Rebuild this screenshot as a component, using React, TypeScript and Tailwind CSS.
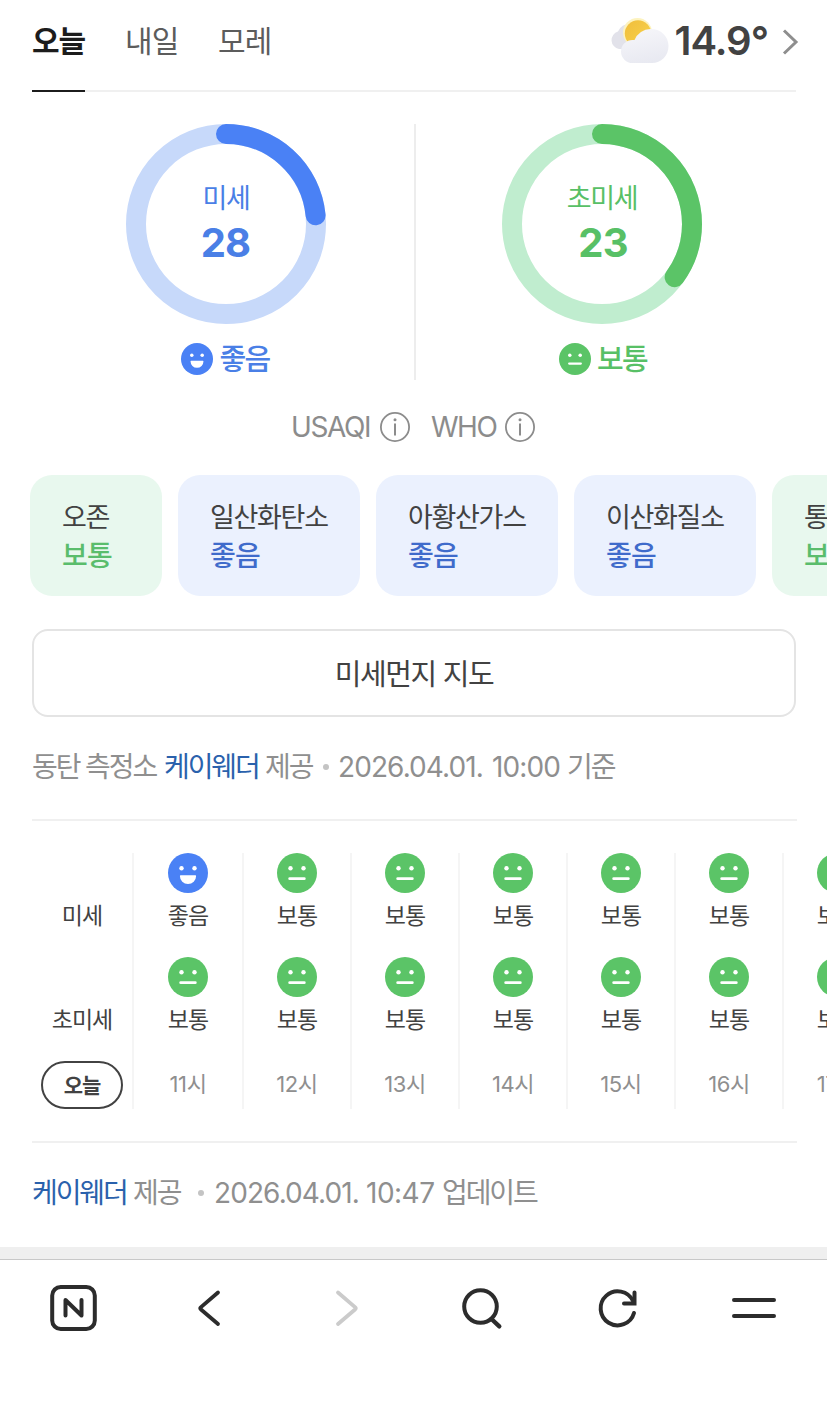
import React from 'react';

type Grade = 'good' | 'normal';

interface Hour {
  time: string;
  dust: Grade;
  fine: Grade;
}

const gradeLabel: Record<Grade, string> = {
  good: '좋음',
  normal: '보통'
};

const gradeFill: Record<Grade, string> = {
  good: '#4a81f5',
  normal: '#5bc467'
};

const pollutants: { name: string; grade: Grade; width: string }[] = [
  { name: '오존', grade: 'normal', width: 'w-[132px]' },
  { name: '일산화탄소', grade: 'good', width: 'w-[182px]' },
  { name: '아황산가스', grade: 'good', width: 'w-[182px]' },
  { name: '이산화질소', grade: 'good', width: 'w-[182px]' },
  { name: '통합대기', grade: 'normal', width: 'w-[182px]' }
];

const hours: Hour[] = [
  { time: '11시', dust: 'good', fine: 'normal' },
  { time: '12시', dust: 'normal', fine: 'normal' },
  { time: '13시', dust: 'normal', fine: 'normal' },
  { time: '14시', dust: 'normal', fine: 'normal' },
  { time: '15시', dust: 'normal', fine: 'normal' },
  { time: '16시', dust: 'normal', fine: 'normal' },
  { time: '17시', dust: 'normal', fine: 'normal' }
];

const Face: React.FC<{ grade: Grade; size: number }> = ({ grade, size }) => (
  <svg width={size} height={size} viewBox="0 0 40 40" className="shrink-0">
    <circle cx="20" cy="20" r="20" fill={gradeFill[grade]} />
    <circle cx="13.5" cy="15.2" r="2.2" fill="#fff" />
    <circle cx="26.5" cy="15.2" r="2.2" fill="#fff" />
    {grade === 'good' ? (
      <path d="M12.6 22.2h14.8q.7 0 .7.7a8.1 8.1 0 0 1-16.2 0q0-.7.7-.7z" fill="#fff" />
    ) : (
      <path d="M12.7 25.7h14.6" stroke="#fff" strokeWidth="2.8" strokeLinecap="round" />
    )}
  </svg>
);

const Gauge: React.FC<{ label: string; value: number; ratio: number; grade: Grade }> = ({ label, value, ratio, grade }) => {
  const length = 2 * Math.PI * 90;
  const isGood = grade === 'good';
  return (
    <div className={`flex w-[376px] flex-col items-center ${isGood ? 'text-[#4a7fe6]' : 'text-[#58c066]'}`}>
      <div className="grid h-[200px] w-[200px] place-items-center">
        <svg width="200" height="200" className="col-start-1 row-start-1 -rotate-90">
          <circle cx="100" cy="100" r="90" fill="none" strokeWidth="20" stroke={isGood ? '#c7d9fa' : '#c0edcf'} />
          <circle
            cx="100"
            cy="100"
            r="90"
            fill="none"
            strokeWidth="20"
            strokeLinecap="round"
            stroke={gradeFill[grade]}
            strokeDasharray={`${length * ratio} ${length}`}
          />
        </svg>
        <div className="col-start-1 row-start-1 flex flex-col items-center pb-[6px]">
          <span className="text-[27px] leading-[44px] tracking-[-1.4px]">{label}</span>
          <span className={`text-[40px] leading-[44px] font-bold tracking-[-0.8px] ${isGood ? 'pr-[1px]' : 'pl-[2px]'}`}>{value}</span>
        </div>
      </div>
      <div className={`mt-[19px] flex h-8 items-center gap-[6px] ${isGood ? 'mr-[1px]' : 'ml-[2px]'}`}>
        <Face grade={grade} size={32} />
        <span className="pt-[2px] text-[29px] leading-8 font-medium tracking-[-1.6px]">{gradeLabel[grade]}</span>
      </div>
    </div>
  );
};

const InfoIcon: React.FC = () => (
  <svg width="30" height="30" viewBox="0 0 30 30" fill="none" stroke="#8c8c8c">
    <circle cx="15" cy="15" r="14.1" strokeWidth="1.8" />
    <path d="M15 11.5v12" strokeWidth="2" />
    <circle cx="15" cy="7.7" r="1.5" fill="#8c8c8c" stroke="none" />
  </svg>
);

const WeatherIcon: React.FC = () => (
  <svg width="60" height="50" viewBox="0 0 60 50">
    <defs>
      <linearGradient id="cloud" x1="0.3" y1="0" x2="0.6" y2="1">
        <stop offset="0" stopColor="#f6f6fa" />
        <stop offset="1" stopColor="#e8e9f1" />
      </linearGradient>
      <linearGradient id="sun" x1="0" y1="0" x2="1" y2="1">
        <stop offset="0" stopColor="#f0bd3c" />
        <stop offset="1" stopColor="#f8d44c" />
      </linearGradient>
    </defs>
    <path d="M10 34a9 9 0 0 1-1-17.5A12 12 0 0 1 21 9c7 0 11 6 11 12v13z" fill="#e2e2ea" />
    <circle cx="28.5" cy="17.5" r="14.5" fill="#fdf3bf" />
    <circle cx="29" cy="18.5" r="13.2" fill="url(#sun)" />
    <path d="M23.5 48a11.5 11.5 0 0 1 0-23q1 0 2 .1A17 17 0 0 1 42 14c10 0 17.5 7.5 17.5 17 0 10-7.5 17-16.5 17z" fill="url(#cloud)" />
  </svg>
);

const Dot: React.FC<{ className: string }> = ({ className }) => (
  <i className={`mb-[1px] h-[6px] w-[6px] shrink-0 rounded-full bg-[#c4c4c4] ${className}`} />
);

const BottomNav: React.FC = () => (
  <nav className="flex h-[162px] items-start border-t border-[#c8c8c8] bg-white pt-6 pl-[49px]">
    <svg width="48" height="48" viewBox="0 0 48 48" fill="none" stroke="#2c2c2c" strokeWidth="4" strokeLinecap="round" strokeLinejoin="round">
      <rect x="3.2" y="3" width="42.6" height="42" rx="8.5" />
      <path d="M16.5 31.5V16L32.5 31.5V16" />
    </svg>
    <svg width="48" height="48" viewBox="0 0 48 48" className="ml-[88px]" fill="none" stroke="#2c2c2c" strokeWidth="3.8" strokeLinecap="round" strokeLinejoin="round">
      <path d="M33 8.5 15.7 23.4q-1 .9 0 1.8L33 40" />
    </svg>
    <svg width="48" height="48" viewBox="0 0 48 48" className="ml-[88px]" fill="none" stroke="#cbcbcb" strokeWidth="3.8" strokeLinecap="round" strokeLinejoin="round">
      <path d="M17 8.5 34.3 23.4q1 .9 0 1.8L17 40" />
    </svg>
    <svg width="48" height="48" viewBox="0 0 48 48" className="ml-[88px]" fill="none" stroke="#2c2c2c" strokeWidth="4" strokeLinecap="round">
      <circle cx="23.5" cy="22.5" r="16.3" />
      <path d="M35 35.5 42.3 42.3" strokeWidth="4.4" />
    </svg>
    <svg width="48" height="48" viewBox="0 0 48 48" className="ml-[88px]" fill="none" stroke="#2c2c2c" strokeWidth="4" strokeLinecap="round">
      <path d="M41 29A17 17 0 1 1 40 17" />
      <path d="M41.5 8.5V19.6H31" />
    </svg>
    <svg width="48" height="48" viewBox="0 0 48 48" className="ml-[89px]" fill="none" stroke="#2c2c2c" strokeWidth="4" strokeLinecap="round">
      <path d="M4 16h40M4 32h40" />
    </svg>
  </nav>
);

export default function App() {
  return (
    <div className="h-[1422px] w-[827px] overflow-hidden bg-white font-['Inter','Noto_Sans_CJK_KR',sans-serif] text-[#424242]">
      <header className="mr-[31px] ml-8 flex h-[92px] justify-between border-b-2 border-[#f0f0f0]">
        <div className="flex gap-10 text-[30px] leading-[82px] tracking-[-0.9px] text-[#5c5c5c]">
          <button className="h-[92px] w-[53px] border-b-2 border-[#1c1c1c] pb-2 text-left font-bold tracking-[-1.2px] whitespace-nowrap text-[#1c1c1c]">오늘</button>
          <button className="h-[92px] w-[53px] pb-[10px] text-left whitespace-nowrap">내일</button>
          <button className="h-[92px] w-[53px] pb-[10px] text-left whitespace-nowrap">모레</button>
        </div>
        <div className="-mr-[3px] flex h-20 items-center">
          <WeatherIcon />
          <span className="mt-[2px] ml-[6px] text-[40px] leading-[80px] font-semibold tracking-[-1px]">14.9°</span>
          <svg width="17" height="28" viewBox="0 0 17 28" className="mt-[4px] ml-[14px]" fill="none" stroke="#8e8e8e" strokeWidth="3">
            <path d="M2 2.5 14 14 2 25.5" />
          </svg>
        </div>
      </header>

      <section className="mt-8 ml-[38px] flex h-64">
        <Gauge label="미세" value={28} ratio={0.234} grade="good" />
        <div className="-mr-[2px] w-[2px] bg-[#ededed]" />
        <Gauge label="초미세" value={23} ratio={0.35} grade="normal" />
      </section>

      <div className="mt-8 ml-[291px] flex h-[30px] items-center text-[28px] leading-[30px] text-[#8c8c8c]">
        <span className="w-[89px] tracking-[-1.4px]">USAQI</span>
        <InfoIcon />
        <span className="ml-[21px] w-[74px] tracking-[-1.5px]">WHO</span>
        <InfoIcon />
      </div>

      <div className="mt-[33px] ml-[30px] flex h-[121px] gap-4">
        {pollutants.map(item => (
          <div
            key={item.name}
            className={`shrink-0 rounded-[22px] pt-[23px] pl-8 leading-[39px] whitespace-nowrap ${item.width} ${item.grade === 'good' ? 'bg-[#ebf1fe]' : 'bg-[#e8f8ee]'}`}
          >
            <p className="text-[27px] tracking-[-1.3px]">{item.name}</p>
            <p className={`text-[28px] font-medium tracking-[-0.8px] ${item.grade === 'good' ? 'text-[#3f6bcb]' : 'text-[#5abd6c]'}`}>{gradeLabel[item.grade]}</p>
          </div>
        ))}
      </div>

      <button className="mt-[33px] ml-8 block h-[88px] w-[764px] rounded-2xl border-2 border-[#e4e4e4] pt-1 text-[29px] tracking-[-1.4px]">
        미세먼지 지도
      </button>

      <div className="mt-[30px] ml-8 flex h-10 items-center text-[28px] leading-10 tracking-[-2.1px] whitespace-nowrap text-[#8f8f8f]">
        <span className="w-[132px]">동탄 측정소</span>
        <span className="w-[101px] text-[#2a61ac]">케이웨더</span>
        <span className="w-[58px]">제공</span>
        <Dot className="mr-[9px]" />
        <span className="w-[154px] tracking-[-0.9px]">2026.04.01.</span>
        <span className="w-[75px] tracking-[-0.9px]">10:00</span>
        <span>기준</span>
      </div>

      <hr className="mt-8 ml-8 w-[765px] border-t-2 border-[#f0f0f0]" />

      <section className="mt-8 flex h-64">
        <div className="flex w-[132px] shrink-0 flex-col items-center pl-8 text-[23px] leading-[26px] tracking-[-1px]">
          <span className="mt-[50px] h-[26px]">미세</span>
          <span className="mt-[78px] h-[26px]">초미세</span>
          <span className="mt-[28px] h-12 w-[82px] rounded-full border-2 border-[#424242] text-center text-[21px] leading-[45px] font-bold">오늘</span>
        </div>
        {hours.map(({ time, dust, fine }, index) => (
          <div
            key={time}
            className={`flex shrink-0 flex-col items-center border-l-2 border-[#f5f5f5] text-[23px] leading-[26px] tracking-[-1px] ${index === 0 ? 'w-[110px]' : 'w-[108px]'}`}
          >
            <Face grade={dust} size={40} />
            <span className="mt-[10px]">{gradeLabel[dust]}</span>
            <span className="mt-[28px]">
              <Face grade={fine} size={40} />
            </span>
            <span className="mt-[10px]">{gradeLabel[fine]}</span>
            <span className="mt-[38px] text-[22px] tracking-[-0.4px] text-[#8f8f8f]">{time}</span>
          </div>
        ))}
      </section>

      <hr className="mt-8 ml-8 w-[765px] border-t-2 border-[#f0f0f0]" />

      <div className="mt-[30px] ml-8 flex h-10 items-center text-[28px] leading-10 tracking-[-2.1px] whitespace-nowrap text-[#8f8f8f]">
        <span className="w-[101px] text-[#2a61ac]">케이웨더</span>
        <span className="w-[65px]">제공</span>
        <Dot className="mr-[10px]" />
        <span className="w-[152px] tracking-[-0.9px]">2026.04.01.</span>
        <span className="w-[76px] tracking-[-0.5px]">10:47</span>
        <span>업데이트</span>
      </div>

      <div className="mt-[34px] h-3 bg-[#efefef]" />
      <BottomNav />
    </div>
  );
}
